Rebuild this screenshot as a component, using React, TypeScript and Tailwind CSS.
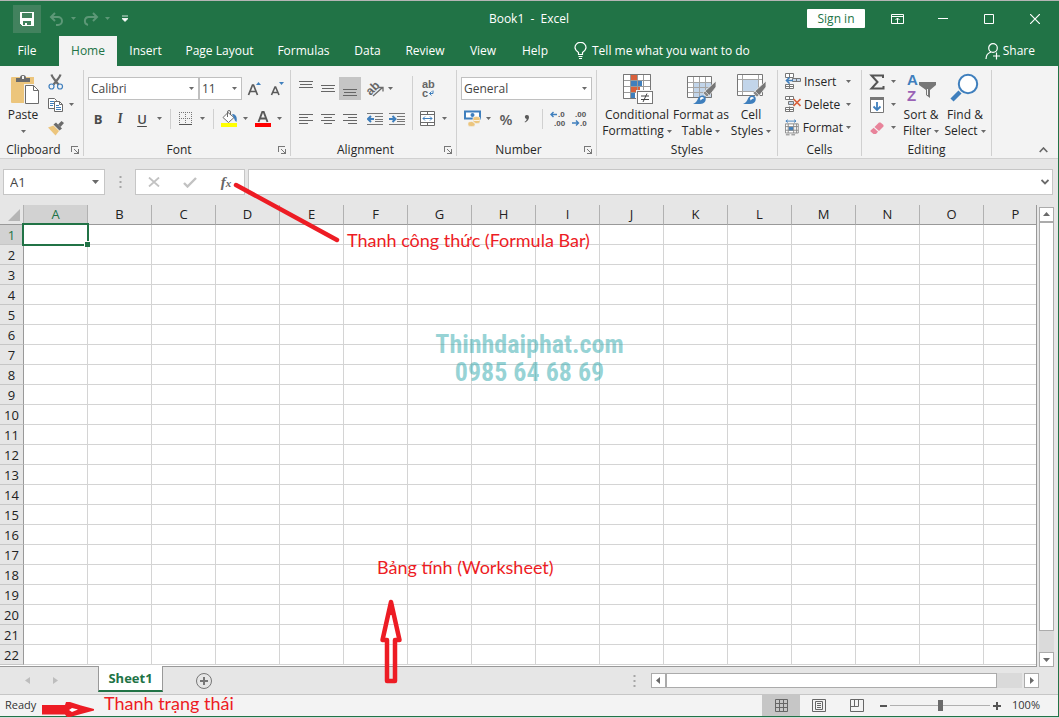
import React from 'react';
import clsx from 'clsx';

const COLUMNS = 'ABCDEFGHIJKLMNOP'.split('');
const ROWS = Array.from({ length: 22 }, (_, i) => i + 1);

const TABS = [
  { name: 'File', width: 'w-[54px] mr-[5px]' },
  { name: 'Home', width: 'w-[58px]' },
  { name: 'Insert', width: 'w-[57px]' },
  { name: 'Page Layout', width: 'w-[91px]' },
  { name: 'Formulas', width: 'w-[77px]' },
  { name: 'Data', width: 'w-[51px]' },
  { name: 'Review', width: 'w-[64px]' },
  { name: 'View', width: 'w-[52px]' },
  { name: 'Help', width: 'w-[52px]' },
];

/* ---------- small shared pieces ---------- */

const Caret: React.FC<{ className?: string }> = ({ className }) => (
  <svg width="5" height="3" viewBox="0 0 5 3" className={clsx('shrink-0', className ?? 'text-[#6a6a6a]')} aria-hidden="true">
    <path d="M0 0h5L2.5 3z" fill="currentColor" />
  </svg>
);

interface IconButtonProps {
  label: string;
  className?: string;
  children: React.ReactNode;
}

const IconButton: React.FC<IconButtonProps> = ({ label, className, children }) => (
  <button type="button" aria-label={label} className={clsx('flex h-[23px] shrink-0 items-center justify-center', className ?? 'w-5')}>
    {children}
  </button>
);

const CaretButton: React.FC<{ label: string; className?: string }> = ({ label, className }) => (
  <IconButton label={label} className={className ?? 'w-3'}>
    <Caret />
  </IconButton>
);

const Divider: React.FC<{ className: string }> = ({ className }) => (
  <span className={clsx('w-px shrink-0 bg-[#d0d0d0]', className)} />
);

interface RibbonSelectProps {
  label: string;
  value: string;
  className: string;
}

const RibbonSelect: React.FC<RibbonSelectProps> = ({ label, value, className }) => (
  <div className={clsx('relative shrink-0', className)}>
    <select
      aria-label={label}
      defaultValue={value}
      className="block h-[23px] w-full appearance-none border border-[#c0c0c0] bg-white pl-[2px] pr-4 text-xs text-[#444]"
    >
      <option>{value}</option>
    </select>
    <Caret className="pointer-events-none absolute right-[5px] top-[10px] text-[#6a6a6a]" />
  </div>
);

interface RibbonGroupProps {
  title: string;
  width: string;
  launcher?: boolean;
  children: React.ReactNode;
}

const RibbonGroup: React.FC<RibbonGroupProps> = ({ title, width, launcher, children }) => (
  <section aria-label={title} className={clsx('mb-[2px] mt-1 flex shrink-0 flex-col border-r border-[#d0d0d0]', width)}>
    <div className="flex h-[73px]">{children}</div>
    <div className="flex h-[13px] items-center">
      <h2 className="flex-1 text-center text-xs leading-4">{title}</h2>
      {launcher && (
        <button type="button" aria-label={`${title} settings`} className="flex w-4 justify-center">
          <svg width="8" height="8" viewBox="0 0 8 8" shapeRendering="crispEdges" aria-hidden="true">
            <path d="M.5 6V.5H7M7.5 3v4.5H3M3 3l4 4" fill="none" stroke="#777" />
          </svg>
        </button>
      )}
    </div>
  </section>
);

interface BigButtonProps {
  icon: React.ReactNode;
  lines: [string, string?];
  className: string;
}

const BigButton: React.FC<BigButtonProps> = ({ icon, lines, className }) => (
  <button type="button" className={clsx('flex shrink-0 flex-col items-center pt-[3px] text-xs leading-4', className)}>
    {icon}
    <span className="mt-[2px] whitespace-nowrap">{lines[0]}</span>
    <span className="flex h-4 items-center gap-[3px] whitespace-nowrap">
      {lines[1]}
      <Caret />
    </span>
  </button>
);

/* ---------- icons ---------- */

const PasteIcon = () => (
  <svg width="34" height="32" viewBox="0 0 34 32" aria-hidden="true">
    <path d="M6 4h22v26H6a1 1 0 0 1-1-1V5a1 1 0 0 1 1-1z" fill="#ecc57c" />
    <path d="M10 9V5h4a3 3 0 0 1 6 0h4v4z" fill="#6b6b6b" />
    <rect x="16" y="3" width="2" height="3" fill="#f3f3f3" />
    <path d="M18 11h11l5 5v16H18z" fill="#f3f3f3" />
    <path d="M19.500 12.500h8l5 5v13h-13z" fill="#fff" stroke="#6b6b6b" />
    <path d="M27.500 12.500v5h5" fill="none" stroke="#6b6b6b" />
  </svg>
);

const ScissorsIcon = () => (
  <svg width="16" height="16" viewBox="0 0 16 16" aria-hidden="true">
    <path d="M3.500 .5C4.500 4 8 7 10.500 10.500M12.500 .5C11.500 4 8 7 5.500 10.500" fill="none" stroke="#6b6b6b" strokeWidth="2.200" />
    <circle cx="3.500" cy="12.500" r="2.500" fill="#f3f3f3" stroke="#3f7fbd" strokeWidth="1.200" />
    <circle cx="12" cy="12.500" r="2.500" fill="#f3f3f3" stroke="#3f7fbd" strokeWidth="1.200" />
  </svg>
);

const CopyIcon = () => (
  <svg width="16" height="16" viewBox="0 0 16 16" aria-hidden="true">
    <path d="M.5 1.500h6l2 2v8h-8z" fill="#fff" stroke="#6b6b6b" />
    <path d="M2 4.500h4M2 6.500h4M2 8.500h3" stroke="#3f7fbd" />
    <path d="M6.500 4.500h5l3 3v7h-8z" fill="#fff" stroke="#6b6b6b" />
    <path d="M11.500 4.500v3h3" fill="none" stroke="#6b6b6b" />
    <path d="M8 8.500h3M8 10.500h5M8 12.500h5" stroke="#3f7fbd" />
  </svg>
);

const PainterIcon = () => (
  <svg width="16" height="16" viewBox="0 0 16 16" aria-hidden="true">
    <path d="M0 7.500l5.500-2L11 11l-3.500 4.500z" fill="#ecc57c" />
    <path d="M5.500 4.500l2.500-2 6 6-2.500 2z" fill="#6b6b6b" />
    <path d="M10 4.500L13.500 1l2.500 2-3.500 4z" fill="#6b6b6b" />
  </svg>
);

const BordersIcon = () => (
  <svg width="14" height="14" viewBox="0 0 14 14" shapeRendering="crispEdges" aria-hidden="true">
    <path d="M0 .5h14M0 6.500h14M.5 0v12M6.500 0v12M12.500 0v12" stroke="#777" strokeDasharray="1 1" />
    <path d="M0 12.500h13" stroke="#555" />
  </svg>
);

const FillColorIcon = () => (
  <svg width="16" height="17" viewBox="0 0 16 17" aria-hidden="true">
    <path d="M7 2.500l6 5-5.500 5L2 7.500z" fill="#fff" stroke="#6b6b6b" />
    <path d="M6.500 7V2a1.500 1.500 0 0 1 3 0v3" fill="none" stroke="#6b6b6b" />
    <path d="M11 4c4 0 5.500 3 4.500 8-1.500-1-2-2-2.500-4z" fill="#3f7fbd" />
    <rect y="13" width="16" height="4" fill="#ff0" />
  </svg>
);

const FontColorIcon = () => (
  <svg width="16" height="17" viewBox="0 0 16 17" aria-hidden="true">
    <path d="M3.500 12L7.300 2h1.400l3.800 10M5 8.500h6" fill="none" stroke="#5a5a5a" strokeWidth="1.900" />
    <rect y="13" width="16" height="4" fill="#f00" />
  </svg>
);

// horizontal rules used by all paragraph alignment buttons
const LinesIcon: React.FC<{ d: string }> = ({ d }) => (
  <svg width="14" height="16" viewBox="0 0 14 16" shapeRendering="crispEdges" aria-hidden="true">
    <path d={d} stroke="#666" />
  </svg>
);

const OrientationIcon = () => (
  <svg width="18" height="18" viewBox="0 0 18 18" className="overflow-visible font-['Liberation_Sans',sans-serif]" aria-hidden="true">
    <text x="0" y="13" fontSize="12" fontWeight="700" fill="#666" transform="rotate(-45 6 9)">ab</text>
    <path d="M7 16l9-8M12.500 7.500H17v4" fill="none" stroke="#6b6b6b" strokeWidth="1.300" />
  </svg>
);

const IndentIcon: React.FC<{ increase?: boolean }> = ({ increase }) => (
  <svg width="16" height="14" viewBox="0 0 16 14" aria-hidden="true">
    <path d="M0 1.500h16M8 4.500h8M8 7.500h8M8 9.500h8M0 12.500h16" stroke="#777" shapeRendering="crispEdges" />
    <path d={increase ? 'M0 7h6M3.500 4L6.500 7l-3 3' : 'M7 7H1M4 4L1 7l3 3'} fill="none" stroke="#3f7fbd" strokeWidth="2" />
  </svg>
);

const WrapIcon = () => (
  <svg width="16" height="18" viewBox="0 0 16 18" className="overflow-visible font-['Liberation_Sans',sans-serif]" aria-hidden="true">
    <text x="2" y="8" fontSize="11" fontWeight="700" fill="#666">ab</text>
    <text x="2" y="17" fontSize="11" fontWeight="700" fill="#666">c</text>
    <path d="M13 10.500v3H9.500M11.500 11.500l-2 2 2 2" fill="none" stroke="#3f7fbd" />
  </svg>
);

const MergeIcon = () => (
  <svg width="16" height="16" viewBox="0 0 16 16" aria-hidden="true">
    <path d="M.5 .5h14v14H.5zM.5 3.500h14M.5 11.500h14M7.500 .5v3M7.500 11.500v3" fill="#fff" stroke="#6b6b6b" />
    <path d="M3 7.500h9M5 5.500l-2 2 2 2M10 5.500l2 2-2 2" fill="none" stroke="#3f7fbd" />
  </svg>
);

const CurrencyIcon = () => (
  <svg width="17" height="17" viewBox="0 0 17 17" aria-hidden="true">
    <rect x="1" y="1.500" width="15" height="7" fill="#fff" stroke="#3f7fbd" strokeWidth="2" />
    <circle cx="8.500" cy="5" r="2" fill="#3f7fbd" />
    <path d="M9 8a3.500 1.500 0 0 1 7 0v4a3.500 1.500 0 0 1-7 0zM4 13a3.500 1.500 0 0 1 7 0v2a3.500 1.500 0 0 1-7 0z" fill="#ecc57c" stroke="#f3f3f3" strokeWidth=".6" />
    <path d="M9.500 10.500h6" stroke="#fff" strokeWidth=".8" />
  </svg>
);

const DecimalIcon: React.FC<{ increase?: boolean }> = ({ increase }) => (
  <svg
    width="18"
    height="18"
    viewBox="0 0 18 18"
    fontSize="8"
    fontWeight="700"
    fill="#555"
    className="overflow-visible font-['Liberation_Sans',sans-serif]"
    aria-hidden="true"
  >
    <text x={increase ? 9 : 4} y="7">{increase ? '.0' : '.00'}</text>
    <text x={increase ? 5 : 9} y="16">{increase ? '.00' : '.0'}</text>
    <path d={increase ? 'M8 4.500H2M4.500 2L2 4.500 4.500 7' : 'M1 13h6M5 10.500L7.500 13 5 15.500'} fill="none" stroke="#3f7fbd" strokeWidth="1.400" />
  </svg>
);

const ConditionalIcon = () => (
  <svg width="32" height="32" viewBox="0 0 32 32" aria-hidden="true">
    <path d="M2.500 1.500h27v24h-27z" fill="#fff" />
    <rect x="10" y="2" width="6" height="5" fill="#d9603b" />
    <rect x="10" y="8" width="11" height="5" fill="#3f7fbd" />
    <rect x="10" y="14" width="9" height="5" fill="#d9603b" />
    <rect x="10" y="20" width="4" height="5" fill="#3f7fbd" />
    <path d="M2.500 1.500h27v24h-27zM2.500 7.500h27M2.500 13.500h27M2.500 19.500h27M9.500 1.500v24M16.500 1.500v24M22.500 1.500v24" fill="none" stroke="#9a9a9a" />
    <path d="M2.500 1.500h27v24h-27z" fill="none" stroke="#777" />
    <rect x="15" y="17" width="17" height="15" fill="#f3f3f3" />
    <rect x="16.500" y="18.500" width="15" height="12" fill="#fff" stroke="#777" />
    <path d="M20 23h8M20 26.500h8M26 20.500l-4 8.500" stroke="#444" />
  </svg>
);

const Brush = () => (
  <>
    <path d="M31 8v6l-7 9-5-4z" fill="#777" stroke="#f3f3f3" strokeWidth=".8" />
    <path d="M20 18l4 4-2 2-4-4z" fill="#8a8a8a" stroke="#f3f3f3" strokeWidth=".6" />
    <path d="M8 31c3-1 4-3 5-5.500 1.500-3.500 6-4 7.500-1 1 3-1 6.500-5.500 6.500z" fill="#3f7fbd" />
    <path d="M15 25c1.500-2 4-1 4 .5-1.500-.5-2.500 1-3.500 2z" fill="#fff" />
  </>
);

const FormatTableIcon = () => (
  <svg width="32" height="32" viewBox="0 0 32 32" aria-hidden="true">
    <path d="M2.500 3.500h24v21h-24z" fill="#fff" />
    <path d="M9 10h18v15H9z" fill="#c2d5ea" />
    <path d="M2.500 9.500h24M2.500 14.500h24M2.500 19.500h24M8.500 3.500v21M14.500 3.500v21M20.500 3.500v21" stroke="#a5a5a5" />
    <path d="M2.500 3.500h24v21h-24z" fill="none" stroke="#777" />
    <Brush />
  </svg>
);

const CellStylesIcon = () => (
  <svg width="32" height="32" viewBox="0 0 32 32" aria-hidden="true">
    <path d="M2.500 1.500h25v21h-25z" fill="#fff" />
    <path d="M8 7h15v11H8z" fill="#c2d5ea" />
    <path d="M2.500 6.500h25M2.500 18.500h25M7.500 1.500v21M23.500 1.500v21" stroke="#a5a5a5" />
    <path d="M2.500 1.500h25v21h-25z" fill="none" stroke="#777" />
    <Brush />
  </svg>
);

const InsertCellsIcon = () => (
  <svg width="16" height="17" viewBox="0 0 16 17" aria-hidden="true">
    <path d="M.5 .5h8v4h-8zM4.500 .5v4M.5 11.500h8v4h-8zM.5 13.500h8M4.500 10.500v5" fill="#fff" stroke="#777" />
    <path d="M7.500 5.500h8v3h-8zM11.500 5.500v3" fill="#c2d5ea" stroke="#777" />
    <path d="M8 7.500H2M4.500 4.500l-3 3 3 3" fill="none" stroke="#3f7fbd" strokeWidth="1.600" />
  </svg>
);

const DeleteCellsIcon = () => (
  <svg width="16" height="17" viewBox="0 0 16 17" aria-hidden="true">
    <path d="M.5 .5h8v3h-8zM4.500 .5v3M.5 11.500h8v4h-8zM.5 13.500h8M4.500 10.500v5" fill="#fff" stroke="#777" />
    <path d="M3.500 5.500h5v3h-5z" fill="#c2d5ea" stroke="#777" />
    <path d="M8.500 3l7 7M15.500 3l-7 7" stroke="#d9603b" strokeWidth="1.700" />
  </svg>
);

const FormatCellsIcon = () => (
  <svg width="16" height="17" viewBox="0 0 16 17" aria-hidden="true">
    <path d="M1 1.500h11M3 0L1 1.500 3 3M10 0l2 1.500L10 3" fill="none" stroke="#3f7fbd" />
    <path d="M.5 5.500h14v9H.5z" fill="#fff" />
    <rect x="4" y="8" width="5" height="4" fill="#3f7fbd" />
    <path d="M.5 4.500h14v10H.5zM.5 7.500h14M.5 11.500h14M3.500 4.500v10M9.500 4.500v10M12.500 4.500v10" fill="none" stroke="#888" />
    <path d="M1 16.500h4M7 16.500h4" stroke="#777" />
  </svg>
);

const SumIcon = () => (
  <svg width="16" height="16" viewBox="0 0 16 16" aria-hidden="true">
    <path d="M14 4V1.500H2.500L8.500 8l-6 6.500H14.500V12" fill="none" stroke="#555" strokeWidth="2" />
  </svg>
);

const FillDownIcon = () => (
  <svg width="14" height="16" viewBox="0 0 14 16" aria-hidden="true">
    <path d="M.5 .5h13v15H.5z" fill="#fff" stroke="#777" />
    <path d="M0 1.500h14" stroke="#777" strokeWidth="3" />
    <path d="M7 5v8M3.500 9.500L7 13l3.500-3.500" fill="none" stroke="#3f7fbd" strokeWidth="1.800" />
  </svg>
);

const EraserIcon = () => (
  <svg width="14" height="14" viewBox="0 0 14 14" aria-hidden="true">
    <path d="M4.500 6L9 1.500h1.500L13.500 4v1.500L9 10z" fill="#e8839a" />
    <path d="M3.700 6.800L8 10.800 6 13H3.500L.5 10.500V9.500z" fill="#e8839a" />
  </svg>
);

const SortIcon = () => (
  <svg width="32" height="32" viewBox="0 0 32 32" className="overflow-visible font-['Liberation_Sans',sans-serif]" fontSize="15" fontWeight="700" aria-hidden="true">
    <text x="2" y="12" fill="#3f7fbd">A</text>
    <text x="2" y="28" fill="#9a62b5">Z</text>
    <path d="M14 9h17v3l-6 5v8l-4-3v-5l-7-5z" fill="#777" />
    <path d="M22.500 16v6" stroke="#f3f3f3" />
  </svg>
);

const FindIcon = () => (
  <svg width="32" height="32" viewBox="0 0 32 32" aria-hidden="true">
    <path d="M3 27l8-8" stroke="#3f7fbd" strokeWidth="4.500" />
    <circle cx="19" cy="11" r="9.200" fill="#fff" stroke="#3f7fbd" strokeWidth="2" />
  </svg>
);

/* ---------- window sections ---------- */

const TitleBar = () => (
  <header className="grid h-[35px] grid-cols-[1fr_auto_1fr] items-center">
    <div className="flex items-center pl-[13px]">
      <button type="button" aria-label="Save" className="flex h-7 w-7 items-center justify-center bg-[#42825e]">
        <svg width="14" height="14" viewBox="0 0 14 14" shapeRendering="crispEdges" aria-hidden="true">
          <path d="M0 0h14v14H2l-2-2zM2 1v5h10V1zM3 9v4h2v-2h2v2h4V9z" fill="#fff" fillRule="evenodd" />
        </svg>
      </button>
      <IconButton label="Undo" className="ml-1 w-6">
        <svg width="16" height="14" viewBox="0 0 16 14" aria-hidden="true">
          <path d="M6 1L2 5l4 4M2 5h7a4 4 0 0 1 0 8H7" fill="none" stroke="#5d9877" strokeWidth="2" />
        </svg>
      </IconButton>
      <IconButton label="Undo history" className="w-2">
        <Caret className="text-[#5d9877]" />
      </IconButton>
      <IconButton label="Redo" className="ml-[2px] w-6">
        <svg width="16" height="14" viewBox="0 0 16 14" aria-hidden="true">
          <path d="M10 1l4 4-4 4M14 5H6a4 4 0 0 0-1 7.900" fill="none" stroke="#5d9877" strokeWidth="2" />
        </svg>
      </IconButton>
      <IconButton label="Redo history" className="w-2">
        <Caret className="text-[#5d9877]" />
      </IconButton>
      <IconButton label="Customize Quick Access Toolbar" className="ml-1 w-5">
        <svg width="6" height="7" viewBox="0 0 6 7" aria-hidden="true">
          <path d="M0 1h6M0 3.500h6L3 6.500z" fill="#fff" stroke="#fff" strokeWidth=".8" />
        </svg>
      </IconButton>
    </div>
    <h1 className="whitespace-pre text-xs text-white">Book1  -  Excel</h1>
    <div className="flex items-center justify-end">
      <button type="button" className="mr-[9px] h-[19px] w-[58px] rounded-[1px] bg-white text-xs leading-4 text-[#217346]">
        Sign in
      </button>
      <IconButton label="Ribbon Display Options" className="w-[46px]">
        <svg width="13" height="10" viewBox="0 0 13 10" aria-hidden="true">
          <path d="M.5 .5h12v9H.5zM.5 2.500h12M6.500 9V4M4.500 6l2-2 2 2" fill="none" stroke="#fff" />
        </svg>
      </IconButton>
      <IconButton label="Minimize" className="w-[46px]">
        <svg width="10" height="10" viewBox="0 0 10 10" aria-hidden="true">
          <path d="M0 4.500h10" stroke="#fff" />
        </svg>
      </IconButton>
      <IconButton label="Maximize" className="w-[46px]">
        <svg width="10" height="10" viewBox="0 0 10 10" aria-hidden="true">
          <path d="M.5 .5h9v9h-9z" fill="none" stroke="#fff" />
        </svg>
      </IconButton>
      <IconButton label="Close" className="w-[46px]">
        <svg width="10" height="10" viewBox="0 0 10 10" aria-hidden="true">
          <path d="M0 0l10 10M10 0L0 10" stroke="#fff" strokeWidth="1.200" />
        </svg>
      </IconButton>
    </div>
  </header>
);

const TabBar = () => (
  <nav className="flex h-[30px] items-stretch text-xs text-white">
    {TABS.map(({ name, width }) => (
      <button
        key={name}
        type="button"
        className={clsx('shrink-0 whitespace-nowrap', width, name === 'Home' && 'bg-[#f3f3f3] text-[#217346]')}
      >
        {name}
      </button>
    ))}
    <button type="button" className="ml-[13px] flex items-center gap-[5px] whitespace-nowrap">
      <svg width="13" height="18" viewBox="0 0 13 18" aria-hidden="true">
        <path d="M4.500 12.500v-2C2.500 9 1 7.500 1 5.500a5.300 5 0 0 1 11 0c0 2-1.500 3.500-3.500 5v2zM4.500 14.500h4M5 16.500h3" fill="none" stroke="#fff" strokeWidth="1.200" />
      </svg>
      Tell me what you want to do
    </button>
    <button type="button" className="ml-auto mr-[23px] flex items-center gap-[2px]">
      <svg width="16" height="17" viewBox="0 0 16 17" aria-hidden="true">
        <circle cx="8" cy="5" r="4.300" fill="none" stroke="#fff" strokeWidth="1.200" />
        <path d="M1 16c0-3.500 2-6 5-7M8 13h7M11.500 9.500v7" fill="none" stroke="#fff" strokeWidth="1.200" />
      </svg>
      Share
    </button>
  </nav>
);

const Ribbon = () => (
  <div className="flex h-[93px] border-b border-[#d0d0d0] bg-[#f3f3f3] text-[#262626]">
    <RibbonGroup title="Clipboard" width="w-[84px]" launcher>
      <BigButton icon={<PasteIcon />} lines={['Paste']} className="w-[46px]" />
      <div className="flex flex-col">
        <IconButton label="Cut"><ScissorsIcon /></IconButton>
        <div className="flex">
          <IconButton label="Copy"><CopyIcon /></IconButton>
          <CaretButton label="Copy options" className="w-[10px]" />
        </div>
        <IconButton label="Format Painter"><PainterIcon /></IconButton>
      </div>
    </RibbonGroup>

    <RibbonGroup title="Font" width="w-[207px]" launcher>
      <div className="flex flex-col gap-[7px] pt-[7px]">
        <div className="flex pl-1">
          <RibbonSelect label="Font" value="Calibri" className="w-[111px]" />
          <RibbonSelect label="Font size" value="11" className="mr-[1px] w-[43px]" />
          <IconButton label="Increase Font Size" className="w-[23px]">
            <svg width="15" height="16" viewBox="0 0 15 16" aria-hidden="true">
              <path d="M1.500 14L5.500 4h1l4 10M3 10.500h6" fill="none" stroke="#5a5a5a" strokeWidth="1.700" />
              <path d="M9 4l2.500-3L14 4z" fill="#3f7fbd" />
            </svg>
          </IconButton>
          <IconButton label="Decrease Font Size" className="w-[23px]">
            <svg width="15" height="16" viewBox="0 0 15 16" aria-hidden="true">
              <path d="M1.500 14L5 6h.6L9 14M2.800 11.500h5" fill="none" stroke="#5a5a5a" strokeWidth="1.600" />
              <path d="M9 1h5l-2.500 3z" fill="#3f7fbd" />
            </svg>
          </IconButton>
        </div>
        <div className="flex items-center pl-[3px] text-[13px] leading-4 text-[#4a4a4a]">
          <IconButton label="Bold" className="w-[22px] font-bold">B</IconButton>
          <IconButton label="Italic" className="w-[22px] font-serif font-semibold italic">I</IconButton>
          <IconButton label="Underline" className="w-[22px] font-semibold underline underline-offset-2">U</IconButton>
          <CaretButton label="Underline options" />
          <Divider className="mx-[5px] h-5" />
          <IconButton label="Borders"><BordersIcon /></IconButton>
          <CaretButton label="Border options" />
          <Divider className="mx-[5px] h-5" />
          <IconButton label="Fill Color"><FillColorIcon /></IconButton>
          <CaretButton label="Fill color options" />
          <IconButton label="Font Color" className="ml-[2px] w-5"><FontColorIcon /></IconButton>
          <CaretButton label="Font color options" />
        </div>
      </div>
    </RibbonGroup>

    <RibbonGroup title="Alignment" width="w-[166px]" launcher>
      <div className="flex w-[121px] flex-col gap-[7px] pl-1 pt-[7px]">
        <div className="flex">
          <IconButton label="Top Align" className="w-[22px]"><LinesIcon d="M0 .5h14M1 3.500h12M0 6.500h14" /></IconButton>
          <IconButton label="Middle Align" className="w-[22px]"><LinesIcon d="M0 4.500h14M1 7.500h12M0 10.500h14" /></IconButton>
          <IconButton label="Bottom Align" className="w-[22px] bg-[#c5c5c5]"><LinesIcon d="M0 8.500h14M1 11.500h12M0 14.500h14" /></IconButton>
          <IconButton label="Orientation" className="ml-1 w-5"><OrientationIcon /></IconButton>
          <CaretButton label="Orientation options" className="w-[10px]" />
        </div>
        <div className="flex">
          <IconButton label="Align Left" className="w-[22px]"><LinesIcon d="M0 3.500h14M0 6.500h9M0 9.500h14M0 12.500h9" /></IconButton>
          <IconButton label="Center" className="w-[22px]"><LinesIcon d="M0 3.500h14M3 6.500h8M0 9.500h14M3 12.500h8" /></IconButton>
          <IconButton label="Align Right" className="w-[22px]"><LinesIcon d="M0 3.500h14M5 6.500h9M0 9.500h14M5 12.500h9" /></IconButton>
          <IconButton label="Decrease Indent" className="ml-1 w-5"><IndentIcon /></IconButton>
          <IconButton label="Increase Indent" className="ml-[2px] w-5"><IndentIcon increase /></IconButton>
        </div>
      </div>
      <Divider className="mr-[5px] mt-[6px] h-[54px]" />
      <div className="flex flex-col gap-[7px] pt-[7px]">
        <IconButton label="Wrap Text"><WrapIcon /></IconButton>
        <div className="flex">
          <IconButton label="Merge & Center"><MergeIcon /></IconButton>
          <CaretButton label="Merge options" />
        </div>
      </div>
    </RibbonGroup>

    <RibbonGroup title="Number" width="w-[140px]" launcher>
      <div className="flex flex-col gap-[7px] pl-1 pt-[7px]">
        <RibbonSelect label="Number format" value="General" className="w-[131px]" />
        <div className="flex items-center pl-[1px] text-[15px] font-semibold leading-4 text-[#5a5a5a]">
          <IconButton label="Accounting Number Format"><CurrencyIcon /></IconButton>
          <CaretButton label="Accounting options" />
          <IconButton label="Percent Style" className="ml-[2px] w-5">%</IconButton>
          <IconButton label="Comma Style" className="ml-[1px] w-5">
            <svg width="6" height="8" viewBox="0 0 6 8" aria-hidden="true">
              <path d="M3 0a2 2 0 0 1 2 2c0 2.500-1.500 4.500-4 5.500L.6 6.800C2 6 2.600 5 2.700 4A2 2 0 1 1 3 0z" fill="#5a5a5a" />
            </svg>
          </IconButton>
          <Divider className="mx-[5px] h-5" />
          <IconButton label="Increase Decimal"><DecimalIcon increase /></IconButton>
          <IconButton label="Decrease Decimal" className="ml-[2px] w-5"><DecimalIcon /></IconButton>
        </div>
      </div>
    </RibbonGroup>

    <RibbonGroup title="Styles" width="w-[181px]">
      <div className="flex pl-1">
        <BigButton icon={<ConditionalIcon />} lines={['Conditional', 'Formatting']} className="w-[72px]" />
        <BigButton icon={<FormatTableIcon />} lines={['Format as', 'Table']} className="w-14" />
        <BigButton icon={<CellStylesIcon />} lines={['Cell', 'Styles']} className="w-11" />
      </div>
    </RibbonGroup>

    <RibbonGroup title="Cells" width="w-[84px]">
      <div className="flex flex-col pl-[7px] text-xs">
        {[
          { name: 'Insert', icon: <InsertCellsIcon /> },
          { name: 'Delete', icon: <DeleteCellsIcon /> },
          { name: 'Format', icon: <FormatCellsIcon /> },
        ].map(({ name, icon }) => (
          <button key={name} type="button" className="flex h-[23px] w-[66px] items-center gap-[3px]">
            {icon}
            {name}
            <Caret className="ml-auto text-[#6a6a6a]" />
          </button>
        ))}
      </div>
    </RibbonGroup>

    <RibbonGroup title="Editing" width="w-[130px]">
      <div className="flex flex-col pl-[5px]">
        {[
          { name: 'AutoSum', icon: <SumIcon /> },
          { name: 'Fill', icon: <FillDownIcon /> },
          { name: 'Clear', icon: <EraserIcon /> },
        ].map(({ name, icon }) => (
          <div key={name} className="flex">
            <IconButton label={name}>{icon}</IconButton>
            <CaretButton label={`${name} options`} />
          </div>
        ))}
      </div>
      <BigButton icon={<SortIcon />} lines={['Sort &', 'Filter']} className="w-11" />
      <BigButton icon={<FindIcon />} lines={['Find &', 'Select']} className="w-11" />
    </RibbonGroup>

    <button type="button" aria-label="Collapse the Ribbon" className="mb-[5px] ml-auto mr-[10px] self-end">
      <svg width="9" height="6" viewBox="0 0 9 6" aria-hidden="true">
        <path d="M.7 5l3.800-4 3.800 4" fill="none" stroke="#666" strokeWidth="1.600" />
      </svg>
    </button>
  </div>
);

const Dots = () => (
  <svg width="3" height="12" viewBox="0 0 3 12" className="shrink-0" aria-hidden="true">
    <path d="M.5 0h2v2h-2zM.5 5h2v2h-2zM.5 10h2v2h-2z" fill="#a6a6a6" />
  </svg>
);

const FormulaBar = () => (
  <div className="flex h-[46px] items-start bg-[#e6e6e6] pl-[3px] pr-[5px] pt-[10px]">
    <div className="relative w-[102px] shrink-0">
      <input aria-label="Name Box" defaultValue="A1" className="block h-[26px] w-full border border-[#c6c6c6] bg-white pl-[6px] text-[13px] text-[#444]" />
      <svg width="7" height="4" viewBox="0 0 7 4" className="pointer-events-none absolute right-[6px] top-[11px]" aria-hidden="true">
        <path d="M0 0h7L3.500 4z" fill="#6a6a6a" />
      </svg>
    </div>
    <div className="flex h-[26px] w-[30px] items-center justify-center">
      <Dots />
    </div>
    <div className="flex h-[26px] w-[110px] shrink-0 items-center border border-[#c6c6c6] bg-white">
      <IconButton label="Cancel" className="w-9">
        <svg width="12" height="10" viewBox="0 0 12 10" aria-hidden="true">
          <path d="M1 .5l10 9M11 .5l-10 9" stroke="#c2c2c2" strokeWidth="1.800" />
        </svg>
      </IconButton>
      <IconButton label="Enter" className="w-9">
        <svg width="14" height="11" viewBox="0 0 14 11" aria-hidden="true">
          <path d="M1 6l3.500 3.500L13 1" fill="none" stroke="#c2c2c2" strokeWidth="2.400" />
        </svg>
      </IconButton>
      <IconButton label="Insert Function" className="w-9 font-['Liberation_Serif',serif] text-[15px] font-bold italic leading-4 text-[#666]">
        <span>f<span className="text-[11px]">x</span></span>
      </IconButton>
    </div>
    <div className="relative ml-[3px] flex-1">
      <input aria-label="Formula Bar" className="block h-[26px] w-full border border-[#c6c6c6] bg-white px-1 text-[13px]" />
      <svg width="8" height="6" viewBox="0 0 8 6" className="pointer-events-none absolute right-1 top-[10px]" aria-hidden="true">
        <path d="M.5 1L4 4.500 7.500 1" fill="none" stroke="#6a6a6a" strokeWidth="1.800" />
      </svg>
    </div>
  </div>
);

const ScrollButton: React.FC<{ label: string; d: string }> = ({ label, d }) => (
  <button type="button" aria-label={label} className="flex h-[15px] w-[15px] shrink-0 items-center justify-center border border-[#ababab] bg-white">
    <svg width="7" height="7" viewBox="0 0 7 7" aria-hidden="true">
      <path d={d} fill="#6a6a6a" />
    </svg>
  </button>
);

const Worksheet = () => (
  <div className="flex min-h-0 flex-1 bg-[#e6e6e6]">
    <div className="min-w-0 flex-1 overflow-hidden border-b border-r border-[#999] bg-white">
      <table className="w-[1048px] table-fixed border-separate border-spacing-0 text-[13px] leading-4">
        <thead>
          <tr>
            <th className="h-5 w-6 border-b border-r border-b-[#999] border-r-[#b1b1b1] bg-[#e6e6e6] p-0">
              <svg width="12" height="12" viewBox="0 0 12 12" className="ml-2" role="img" aria-label="Select all">
                <path d="M12 0v12H0z" fill="#b5b5b5" />
              </svg>
            </th>
            {COLUMNS.map((col) => (
              <th
                key={col}
                scope="col"
                className={clsx(
                  'h-5 w-16 border-b border-r border-r-[#b1b1b1] p-0 pb-[2px] font-normal',
                  col === 'A' ? 'border-b-[#217346] bg-[#d2d2d2] text-[#217346]' : 'border-b-[#999] bg-[#e6e6e6] text-[#222]',
                )}
              >
                {col}
              </th>
            ))}
          </tr>
        </thead>
        <tbody>
          {ROWS.map((row) => (
            <tr key={row}>
              <th
                scope="row"
                className={clsx(
                  'h-5 border-b border-r border-b-[#c6c6c6] border-r-[#999] p-0 pt-[1px] font-normal',
                  row === 1 ? 'bg-[#d2d2d2] text-[#217346]' : 'bg-[#e6e6e6] text-[#222]',
                )}
              >
                {row}
              </th>
              {COLUMNS.map((col) => (
                <td key={col} className="relative h-5 border-b border-r border-[#d4d4d4] p-0">
                  {col === 'A' && row === 1 && (
                    <span className="absolute -bottom-[2px] -left-[2px] -right-[2px] -top-[2px] z-10 border-2 border-[#217346]">
                      <span className="absolute -bottom-[3px] -right-[3px] h-[6px] w-[6px] border-l border-t border-white bg-[#217346]" />
                    </span>
                  )}
                </td>
              ))}
            </tr>
          ))}
        </tbody>
      </table>
    </div>
    <div className="mr-1 mt-[2px] flex w-[17px] flex-col items-end">
      <ScrollButton label="Scroll up" d="M0 5l3.500-4L7 5z" />
      <div className="flex w-[15px] flex-1 flex-col bg-[#dadada]">
        <div className="h-[95%] border border-[#ababab] bg-white" />
      </div>
      <ScrollButton label="Scroll down" d="M0 2h7L3.500 6z" />
    </div>
  </div>
);

const SheetTabs = () => (
  <div className="flex h-[27px] items-center bg-[#e6e6e6]">
    <button type="button" aria-label="Previous sheet" className="ml-[17px] flex w-5 justify-center">
      <svg width="5" height="7" viewBox="0 0 5 7" aria-hidden="true"><path d="M5 0v7L0 3.500z" fill="#bdbdbd" /></svg>
    </button>
    <button type="button" aria-label="Next sheet" className="ml-2 flex w-5 justify-center">
      <svg width="5" height="7" viewBox="0 0 5 7" aria-hidden="true"><path d="M0 0v7l5-3.500z" fill="#bdbdbd" /></svg>
    </button>
    <button
      type="button"
      className="-mt-px ml-[33px] h-[26px] w-[65px] self-start border-x border-b-2 border-x-[#999] border-b-[#217346] bg-white text-[13px] font-bold leading-4 text-[#217346]"
    >
      Sheet1
    </button>
    <button type="button" aria-label="New sheet" className="ml-8">
      <svg width="18" height="18" viewBox="0 0 18 18" aria-hidden="true">
        <circle cx="9" cy="9" r="7.500" fill="none" stroke="#777" />
        <path d="M9 5v8M5 9h8" stroke="#777" strokeWidth="2" />
      </svg>
    </button>
    <div className="ml-auto mr-[19px] flex items-center">
      <Dots />
      <div className="ml-[15px] flex w-[388px]">
        <ScrollButton label="Scroll left" d="M5 0v7L1 3.500z" />
        <div className="mr-[2px] flex h-[15px] flex-1 bg-[#dadada]">
          <div className="w-[93%] border border-[#ababab] bg-white" />
        </div>
        <ScrollButton label="Scroll right" d="M2 0v7l4-3.500z" />
      </div>
    </div>
  </div>
);

const StatusBar = () => (
  <footer className="flex h-[22px] items-center border-t border-[#c6c6c6] bg-[#f3f3f3] pr-[18px] text-[11px] text-[#333]">
    <span className="pl-[5px]">Ready</span>
    <button type="button" aria-label="Normal view" aria-pressed="true" className="ml-auto flex h-[21px] w-[38px] items-center justify-center bg-[#c6c6c6]">
      <svg width="13" height="13" viewBox="0 0 13 13" aria-hidden="true">
        <path d="M.5 .5h12v12H.5zM4.500 .5v12M8.500 .5v12M.5 4.500h12M.5 8.500h12" fill="none" stroke="#666" />
      </svg>
    </button>
    <button type="button" aria-label="Page Layout view" className="flex h-[21px] w-[38px] items-center justify-center">
      <svg width="14" height="13" viewBox="0 0 14 13" aria-hidden="true">
        <path d="M.5 .5h13v12H.5zM3.500 2.500h7v8h-7zM5 4.500h4M5 6.500h4M5 8.500h4" fill="none" stroke="#666" />
      </svg>
    </button>
    <button type="button" aria-label="Page Break Preview" className="flex h-[21px] w-[38px] items-center justify-center">
      <svg width="14" height="13" viewBox="0 0 14 13" aria-hidden="true">
        <path d="M.5 .5h13v12H.5zM4.500 .5v7M8.500 .5v7M.5 7.500h8" fill="none" stroke="#666" />
      </svg>
    </button>
    <button type="button" aria-label="Zoom out" className="flex w-[14px] justify-center">
      <svg width="7" height="8" viewBox="0 0 7 8" aria-hidden="true"><path d="M0 4h7" stroke="#555" strokeWidth="2" /></svg>
    </button>
    <input
      type="range"
      aria-label="Zoom"
      defaultValue={50}
      className="h-[11px] w-[100px] appearance-none bg-transparent [&::-webkit-slider-runnable-track]:h-[11px] [&::-webkit-slider-runnable-track]:bg-[linear-gradient(#b0b0b0,#b0b0b0)] [&::-webkit-slider-runnable-track]:bg-[length:100%_1px] [&::-webkit-slider-runnable-track]:bg-center [&::-webkit-slider-runnable-track]:bg-no-repeat [&::-webkit-slider-thumb]:h-[11px] [&::-webkit-slider-thumb]:w-[5px] [&::-webkit-slider-thumb]:appearance-none [&::-webkit-slider-thumb]:bg-[#6a6a6a]"
    />
    <button type="button" aria-label="Zoom in" className="flex w-[14px] justify-center">
      <svg width="8" height="8" viewBox="0 0 8 8" aria-hidden="true"><path d="M0 4h8M4 0v8" stroke="#555" strokeWidth="2" /></svg>
    </button>
    <span className="w-9 text-right">100%</span>
  </footer>
);

// red call-outs and the watermark lie on top of the window
const Annotations = () => (
  <div className="pointer-events-none absolute inset-0 font-[Lato,sans-serif] text-[18px] leading-5 text-[#ed1c24]">
    <svg width="110" height="64" viewBox="0 0 110 64" className="absolute left-[232px] top-[179px]" aria-hidden="true">
      <path d="M4 5l101 55" stroke="#ed1c24" strokeWidth="4.500" strokeLinecap="round" />
    </svg>
    <p className="absolute left-[347px] top-[229px] whitespace-nowrap">Thanh công thức (Formula Bar)</p>
    <p className="absolute left-[377px] top-[556px] whitespace-nowrap">Bảng tính (Worksheet)</p>
    <svg width="24" height="88" viewBox="0 0 24 88" className="absolute left-[379px] top-[596px]" aria-hidden="true">
      <path d="M12 5L3.500 43H8v41h8V43h4.500z" fill="none" stroke="#ed1c24" strokeWidth="4.500" strokeLinejoin="round" />
      <path d="M12 4l-4 14h8z" fill="#ed1c24" />
    </svg>
    <svg width="54" height="18" viewBox="0 0 54 18" className="absolute left-[41px] top-[699px]" aria-hidden="true">
      <path d="M1 5h23l1-3h4l11 3.500L53 9v1.500L40 14l-11 3h-3l-2-2.500H1z" fill="#ed1c24" />
      <path d="M28 10l3-2 6 1.500-6 2.500z" fill="#fff" />
    </svg>
    <p className="absolute left-[104px] top-[692px] whitespace-nowrap">Thanh trạng thái</p>
    <div className="absolute left-1/2 top-[329px] -translate-x-1/2 whitespace-nowrap text-center font-['Liberation_Sans_Narrow','Roboto_Condensed','Liberation_Sans',sans-serif] text-[26px] font-bold leading-7 text-[#2fa8ac]/50">
      <p>Thinhdaiphat.com</p>
      <p>0985 64 68 69</p>
    </div>
  </div>
);

export default function App() {
  return (
    <div className="relative flex h-screen flex-col overflow-hidden border-t border-[#b5b5b5] bg-[#d8d8d8] pb-px font-['Open_Sans',sans-serif]">
      <div className="flex min-h-0 flex-1 flex-col border-b border-r border-[#217346] bg-[#217346]">
        <TitleBar />
        <TabBar />
        <Ribbon />
        <FormulaBar />
        <Worksheet />
        <SheetTabs />
        <StatusBar />
      </div>
      <Annotations />
    </div>
  );
}
